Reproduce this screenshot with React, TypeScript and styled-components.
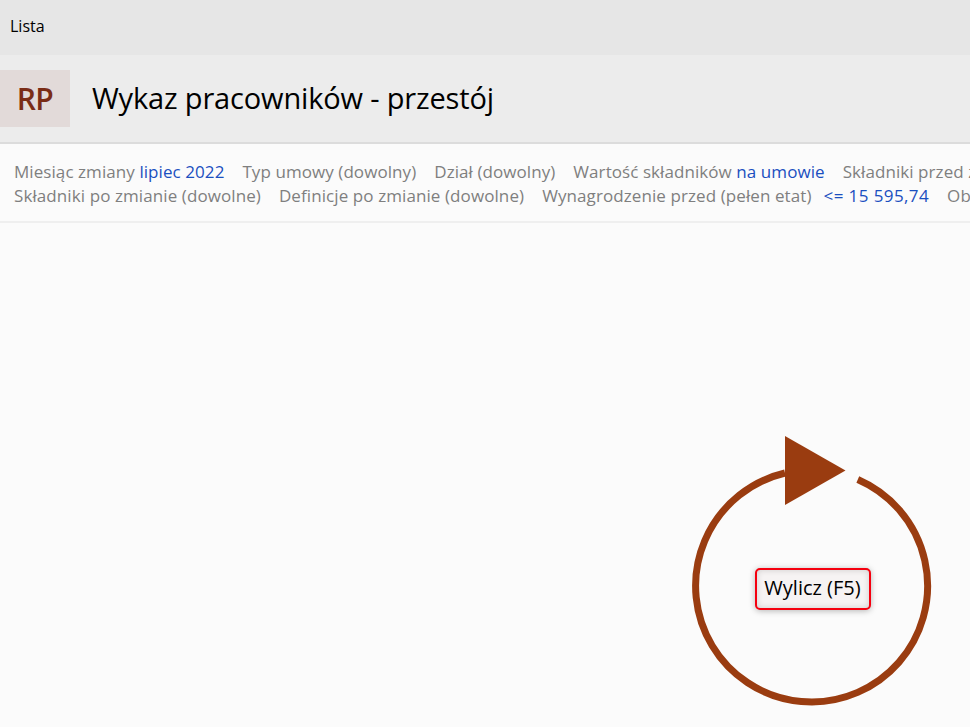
import React from "react";
import styled, { createGlobalStyle } from "styled-components";

const GlobalStyle = createGlobalStyle`
  html, body {
    margin: 0;
    height: 100%;
    overflow: hidden;
    background: #fbfbfb;
    font-family: "Open Sans", "Noto Sans", "Liberation Sans", sans-serif;
  }
`;

const Page = styled.div`
  width: 970px;
  height: 727px;
  display: flex;
  flex-direction: column;
  overflow: hidden;
`;

const TabBar = styled.div`
  height: 55px;
  flex: none;
  display: flex;
  align-items: center;
  padding: 0 0 3px 10px;
  box-sizing: border-box;
  background: #e6e6e6;
  color: #000;
  font-size: 16px;
`;

const Header = styled.div`
  height: 89px;
  flex: none;
  box-sizing: border-box;
  display: flex;
  align-items: flex-start;
  padding-top: 15px;
  gap: 22px;
  background: #ececec;
  border-bottom: 2px solid #dcdcdc;
`;

const Badge = styled.div`
  width: 70px;
  height: 57px;
  display: flex;
  align-items: center;
  justify-content: center;
  background: #e2dad9;
  color: #7a2c16;
  font-size: 30px;
  font-weight: 600;
  letter-spacing: -0.5px;
`;

const Title = styled.h1`
  margin: 0;
  height: 57px;
  line-height: 55px;
  font-size: 29px;
  font-weight: 400;
  color: #000;
  letter-spacing: -0.16px;
  white-space: nowrap;
`;

const Filters = styled.div`
  height: 79px;
  flex: none;
  box-sizing: border-box;
  padding: 16px 0 0 14px;
  border-bottom: 2px solid #efefef;
  overflow: hidden;
`;

const FilterRow = styled.div<{ $spacing: number }>`
  display: flex;
  gap: 18px;
  height: 24px;
  line-height: 24px;
  font-size: 17px;
  letter-spacing: ${(p) => p.$spacing}px;
  color: #7f7f7f;
  white-space: nowrap;
`;

const Value = styled.span`
  color: #1a4fc0;
`;

const Threshold = styled(Value)`
  margin-left: -6px;
  letter-spacing: 0.4px;
`;

const Content = styled.div`
  flex: 1;
  display: flex;
  justify-content: flex-end;
  align-items: flex-start;
  padding: 213px 38px 0 0;
`;

const RunWidget = styled.div`
  position: relative;
  width: 240px;
  height: 271px;
`;

const RunIcon = styled.svg`
  display: block;
`;

const RunButton = styled.button`
  position: absolute;
  left: 63px;
  top: 132px;
  width: 116px;
  height: 42px;
  padding: 0 1px 3px 0;
  border: 2px solid #f5000f;
  border-radius: 5px;
  background: #f6f3f3;
  box-shadow: 0 1px 6px rgba(0, 0, 0, 0.28), inset 0 0 6px rgba(0, 0, 0, 0.16);
  color: #000;
  font-family: inherit;
  font-size: 20px;
`;

export default function App() {
  return (
    <Page>
      <GlobalStyle />
      <TabBar>Lista</TabBar>
      <Header>
        <Badge>RP</Badge>
        <Title>Wykaz pracowników - przestój</Title>
      </Header>
      <Filters>
        <FilterRow $spacing={0.07}>
          <span>Miesiąc zmiany <Value>lipiec 2022</Value></span>
          <span>Typ umowy (dowolny)</span>
          <span>Dział (dowolny)</span>
          <span>Wartość składników <Value>na umowie</Value></span>
          <span>Składniki przed zmianą (dowolne)</span>
        </FilterRow>
        <FilterRow $spacing={0.09}>
          <span>Składniki po zmianie (dowolne)</span>
          <span>Definicje po zmianie (dowolne)</span>
          <span>Wynagrodzenie przed (pełen etat)</span>
          <Threshold>&lt;= 15 595,74</Threshold>
          <span>Obecne</span>
        </FilterRow>
      </Filters>
      <Content>
        <RunWidget>
          <RunIcon width="240" height="271" viewBox="692 436 240 271">
            <path
              d="M 857.8 479.5 A 116 116 0 1 1 785 473"
              fill="none"
              stroke="#9a3c10"
              strokeWidth="7"
            />
            <polygon points="785,436 785,505 845.5,470.5" fill="#9a3c10" />
          </RunIcon>
          <RunButton>Wylicz (F5)</RunButton>
        </RunWidget>
      </Content>
    </Page>
  );
}
